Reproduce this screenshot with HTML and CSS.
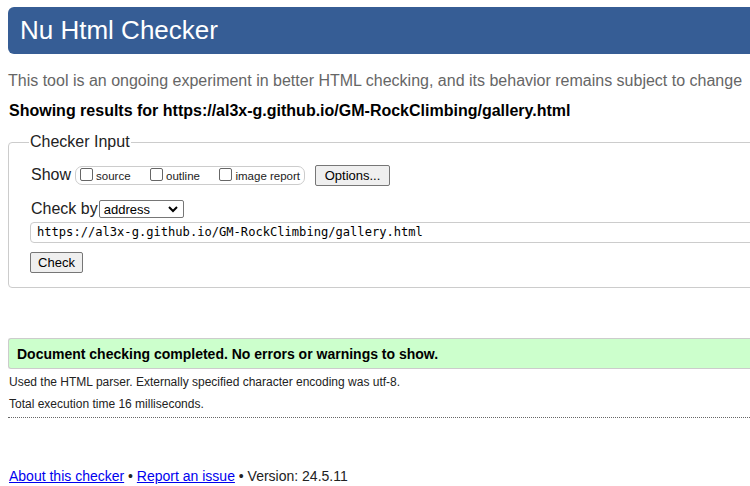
FILE: index.html
```html
<!DOCTYPE html>
<html>
<head>
<meta charset="utf-8">
<title>Nu Html Checker</title>
<link rel="stylesheet" href="styles.css">
</head>
<body>
<div class="page">
  <h1 class="title">Nu Html Checker</h1>
  <p class="intro">This tool is an ongoing experiment in better HTML checking, and its behavior remains subject to change</p>
  <p class="showing">Showing results for https://al3x-g.github.io/GM-RockClimbing/gallery.html</p>
  <fieldset class="input">
    <legend>Checker Input</legend>
    <div class="row show-row">
      <span class="lbl">Show</span>
      <span class="group">
        <label class="cb"><span class="box"></span>source</label>
        <label class="cb"><span class="box"></span>outline</label>
        <label class="cb"><span class="box"></span>image report</label>
      </span>
      <span class="btn opt">Options...</span>
    </div>
    <div class="row by-row">
      <span class="lbl">Check by</span>
      <span class="select">address<svg width="10" height="7" viewBox="0 0 10 7"><path d="M1 1 L5 5 L9 1" fill="none" stroke="#000" stroke-width="2"/></svg></span>
    </div>
    <div class="url">https://al3x-g.github.io/GM-RockClimbing/gallery.html</div>
    <span class="btn check">Check</span>
  </fieldset>
  <div class="success">Document checking completed. No errors or warnings to show.</div>
  <p class="details">Used the HTML parser. Externally specified character encoding was utf-8.</p>
  <p class="details">Total execution time 16 milliseconds.</p>
  <hr class="dots">
  <p class="footer"><a href="#">About this checker</a> • <a href="#">Report an issue</a> • Version: 24.5.11</p>
</div>
</body>
</html>
```
FILE: styles.css
```css
html { overflow: hidden; }
body {
  margin: 0;
  padding: 7px 0 0 8px;
  font-family: "Liberation Sans", Arial, sans-serif;
  color: #000;
  background: #fff;
}
.page { width: 900px; }
.title {
  margin: 0;
  height: 47px;
  box-sizing: border-box;
  padding: 8px 12px 0;
  background: #365d95;
  color: #fff;
  font-weight: normal;
  font-size: 26px;
  line-height: 30px;
  border-radius: 6px;
}
.intro {
  margin: 17px 0 0;
  font-size: 16px;
  line-height: 20px;
  color: #666;
}
.showing {
  margin: 10px 0 0 1px;
  font-size: 16px;
  line-height: 20px;
  font-weight: bold;
}
.input {
  margin: 12px 0 0;
  padding: 13px 0 14px 22px;
  border: 1px solid #ccc;
  border-radius: 4px;
}
.input legend {
  padding: 0 1px;
  margin-left: -2px;
  font-size: 16px;
  line-height: 18px;
  color: #222;
}
.row { display: flex; align-items: center; }
.lbl { font-size: 16px; line-height: 20px; color: #222; }
.show-row { height: 22px; }
.group {
  display: flex;
  align-items: center;
  margin-left: 4px;
  height: 17px;
  border: 1px solid #ccc;
  border-radius: 7px;
  padding: 0 4px 0 4px;
  width: 220px;
  justify-content: space-between;
}
.cb {
  display: flex;
  align-items: center;
  font-size: 11.5px;
  color: #222;
  margin-top: 2px;
}
.box {
  width: 11px;
  height: 11px;
  border: 1px solid #666;
  border-radius: 2px;
  margin-right: 3px;
  margin-top: -4px;
}
.btn {
  display: inline-block;
  box-sizing: border-box;
  border: 1px solid #767676;
  border-radius: 2px;
  background: #efefef;
  font-size: 13px;
  color: #000;
  text-align: center;
}
.opt { margin-left: 10px; width: 75px; height: 21px; line-height: 19px; }
.by-row { margin-top: 13px; }
.select {
  margin-left: 1px;
  box-sizing: border-box;
  width: 85px;
  height: 18px;
  border: 1px solid #767676;
  border-radius: 2px;
  display: flex;
  align-items: center;
  justify-content: space-between;
  padding: 0 5px 0 4px;
  font-size: 13px;
}
.url {
  margin: 3px 0 0 -1px;
  height: 21px;
  box-sizing: border-box;
  border: 1px solid #ccc;
  border-radius: 4px 0 0 4px;
  padding: 0 0 0 6px;
  font-family: "DejaVu Sans Mono", monospace;
  font-size: 12.1px;
  line-height: 19px;
  color: #000;
}
.check { margin: 9px 0 0 -1px; width: 53px; height: 21px; line-height: 19px; }
.success {
  margin-top: 50px;
  height: 31px;
  box-sizing: border-box;
  background: #ccffcc;
  border: 1px solid #ccc;
  border-right: none;
  border-radius: 3px 0 0 3px;
  padding: 6px 0 0 8px;
  font-size: 14px;
  line-height: 18px;
  font-weight: bold;
}
.details {
  margin: 5px 0 0 1px;
  font-size: 12px;
  line-height: 17px;
  color: #222;
}
.details + .details { margin-top: 5px; }
.dots {
  margin: 4px 0 0;
  border: none;
  border-top: 1px dotted #666;
  height: 0;
  width: 742px;
}
.footer {
  margin: 49px 0 0 1px;
  font-size: 14px;
  line-height: 18px;
  color: #222;
}
.footer a { color: #00e; }
```
